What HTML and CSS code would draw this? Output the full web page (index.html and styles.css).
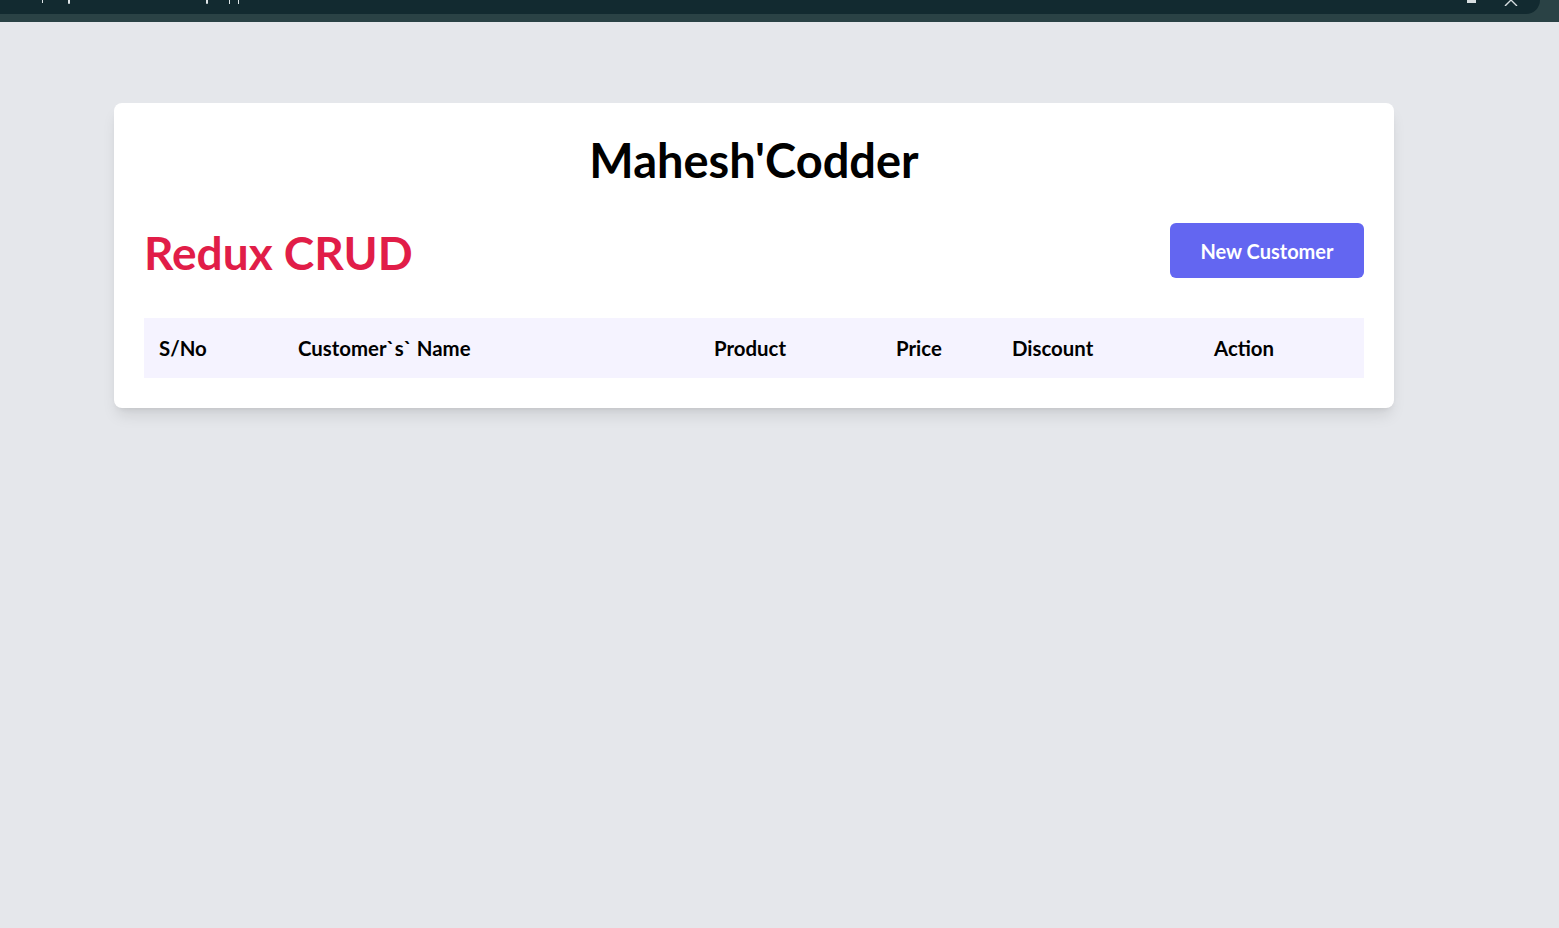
FILE: index.html
```html
<!DOCTYPE html>
<html lang="en">
<head>
<meta charset="utf-8">
<title>Redux CRUD</title>
<link rel="stylesheet" href="styles.css">
</head>
<body>
<div class="chrome">
  <div class="chrome-top">
    <span class="mark m1"></span>
    <span class="mark m2"></span>
    <span class="mark m3"></span>
    <span class="mark m4"></span>
    <span class="mark m5"></span>
    <span class="ic-min"></span>
    <svg class="ic-x" width="14" height="6" viewBox="0 0 14 6"><path d="M1 -6 L13 6 M13 -6 L1 6" stroke="#d8dfe1" stroke-width="1.4" fill="none"/></svg>
  </div>
</div>
<main class="page">
  <section class="card">
    <h1 class="brand">Mahesh'Codder</h1>
    <div class="toolbar">
      <h2 class="title">Redux CRUD</h2>
      <button class="btn">New Customer</button>
    </div>
    <div class="table">
      <div class="th">S/No</div>
      <div class="th">Customer`s` Name</div>
      <div class="th">Product</div>
      <div class="th">Price</div>
      <div class="th">Discount</div>
      <div class="th">Action</div>
    </div>
  </section>
</main>
</body>
</html>
```
FILE: styles.css
```css
* { box-sizing: border-box; }
html, body { margin: 0; padding: 0; }
body {
  background: #e5e7eb;
  font-family: Lato, "Open Sans", sans-serif;
  height: 928px;
  overflow: hidden;
}
.chrome {
  height: 22px;
  background: #2a4245;
}
.chrome-top {
  height: 14px;
  width: 1540px;
  background: #122a30;
  border-bottom-right-radius: 14px;
  position: relative;
  overflow: hidden;
}
.mark {
  position: absolute;
  top: 0;
  width: 1px;
  height: 3px;
  background: #dfe6e8;
}
.m1 { left: 42px; }
.m2 { left: 68px; height: 4px; width: 2px; border-radius: 0 0 2px 2px; }
.m3 { left: 206px; height: 4px; width: 2px; border-radius: 0 0 2px 2px; }
.m4 { left: 229px; height: 4px; }
.m5 { left: 238px; height: 4px; }
.ic-min {
  position: absolute;
  left: 1467px;
  top: 0;
  width: 9px;
  height: 3px;
  background: #d8dfe1;
}
.ic-x {
  position: absolute;
  left: 1504px;
  top: 0;
}
.page {
  padding: 81px 0 0 114px;
}
.card {
  width: 1280px;
  background: #fff;
  border-radius: 8px;
  box-shadow: 0 10px 15px -3px rgba(0,0,0,0.1), 0 4px 6px -4px rgba(0,0,0,0.1);
  padding: 30px;
}
.brand {
  margin: 0;
  text-align: center;
  font-size: 47px;
  line-height: 54px;
  font-weight: 700;
  color: #000;
}
.toolbar {
  margin-top: 36px;
  display: flex;
  align-items: flex-start;
  justify-content: space-between;
}
.title {
  margin: 2px 0 -2px;
  font-size: 46px;
  line-height: 55px;
  font-weight: 700;
  color: #e11d48;
}
.btn {
  width: 194px;
  height: 55px;
  border: 0;
  border-radius: 6px;
  background: #6366f1;
  color: #fff;
  font-family: inherit;
  font-size: 20px;
  font-weight: 700;
  cursor: pointer;
}
.table {
  margin-top: 40px;
  display: grid;
  grid-template-columns: 139px 416px 182px 116px 202px 165px;
  background: #f5f3ff;
  height: 60px;
  align-items: center;
}
.th {
  padding-left: 15px;
  font-size: 20.4px;
  font-weight: 700;
  color: #000;
}
```
